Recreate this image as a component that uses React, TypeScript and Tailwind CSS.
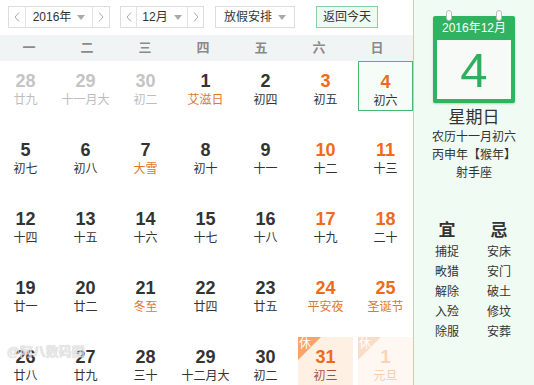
import React from "react";

type Day = {
  n: string;
  l: string;
  kind?: "prev" | "wk" | "fest" | "today" | "rest" | "next";
};

const days: Day[] = [
  { n: "28", l: "廿九", kind: "prev" },
  { n: "29", l: "十一月大", kind: "prev" },
  { n: "30", l: "初二", kind: "prev" },
  { n: "1", l: "艾滋日", kind: "fest" },
  { n: "2", l: "初四" },
  { n: "3", l: "初五", kind: "wk" },
  { n: "4", l: "初六", kind: "today" },
  { n: "5", l: "初七" },
  { n: "6", l: "初八" },
  { n: "7", l: "大雪", kind: "fest" },
  { n: "8", l: "初十" },
  { n: "9", l: "十一" },
  { n: "10", l: "十二", kind: "wk" },
  { n: "11", l: "十三", kind: "wk" },
  { n: "12", l: "十四" },
  { n: "13", l: "十五" },
  { n: "14", l: "十六" },
  { n: "15", l: "十七" },
  { n: "16", l: "十八" },
  { n: "17", l: "十九", kind: "wk" },
  { n: "18", l: "二十", kind: "wk" },
  { n: "19", l: "廿一" },
  { n: "20", l: "廿二" },
  { n: "21", l: "冬至", kind: "fest" },
  { n: "22", l: "廿四" },
  { n: "23", l: "廿五" },
  { n: "24", l: "平安夜", kind: "fest" },
  { n: "25", l: "圣诞节", kind: "fest" },
  { n: "26", l: "廿八" },
  { n: "27", l: "廿九" },
  { n: "28", l: "三十" },
  { n: "29", l: "十二月大" },
  { n: "30", l: "初二" },
  { n: "31", l: "初三", kind: "rest" },
  { n: "1", l: "元旦", kind: "next" },
];

const Caret = () => (
  <svg width="8" height="5" viewBox="0 0 8 5" className="ml-[6px]">
    <path d="M0 0 L8 0 L4 5 Z" fill="#aaa" />
  </svg>
);

const Chev = ({ dir }: { dir: "l" | "r" }) => (
  <svg width="6" height="10" viewBox="0 0 6 10">
    <path
      d={dir === "l" ? "M5 0.5 L1 5 L5 9.5" : "M1 0.5 L5 5 L1 9.5"}
      stroke="#aaa"
      strokeWidth="1"
      fill="none"
    />
  </svg>
);

function Cell({ d }: { d: Day }) {
  let num = "text-[#333]";
  let lun = "text-[#333]";
  let box = "";
  if (d.kind === "prev") {
    num = "text-[#c4c4c4]";
    lun = "text-[#bdbdbd]";
  } else if (d.kind === "wk") {
    num = "text-[#f06a1c]";
  } else if (d.kind === "fest") {
    lun = "text-[#e0782c]";
    if (d.l === "平安夜" || d.l === "圣诞节") num = "text-[#f06a1c]";
  } else if (d.kind === "today") {
    num = "text-[#f06a1c]";
    box = "border border-[#4cb672] bg-[#f6fdf8]";
  } else if (d.kind === "rest") {
    num = "text-[#f06a1c]";
    lun = "text-[#a8503a]";
    box = "bg-[#fff0e4]";
  } else if (d.kind === "next") {
    num = "text-[#fbd2b4]";
    lun = "text-[#f7cdb0]";
    box = "bg-[#fff8f2]";
  }
  return (
    <div className={`relative h-[50px] w-[55px] flex flex-col items-center ${box}`}>
      {(d.kind === "rest" || d.kind === "next") && (
        <div className="absolute left-0 top-0 w-[23px] h-[23px]">
          <svg width="23" height="23" viewBox="0 0 23 23" className="absolute left-0 top-0">
            <path d="M0 0 L23 0 L0 23 Z" fill={d.kind === "rest" ? "#f6a46a" : "#fbdcc6"} />
          </svg>
          <span className="absolute left-[1px] top-[0px] text-[12px] leading-[14px] text-white">休</span>
        </div>
      )}
      <div className={`mt-[9px] h-[22px] leading-[22px] text-[18px] font-bold ${num}`} style={{ fontFamily: "'Liberation Sans', Arial, sans-serif" }}>
        {d.n}
      </div>
      <div className={`h-[16px] leading-[16px] text-[12px] whitespace-nowrap ${lun}`}>{d.l}</div>
    </div>
  );
}

export default function App() {
  const font = "'Liberation Sans', 'Noto Sans CJK SC', sans-serif";
  return (
    <div
      className="flex w-[534px] h-[385px] overflow-hidden bg-white text-[#333]"
      style={{ fontFamily: font }}
    >
      <div className="relative w-[413px] shrink-0 flex flex-col overflow-hidden">
        <div className="h-[35px] flex items-start pt-[6px] pl-[8px] shrink-0 text-[12px]">
          <div className="flex h-[22px] w-[102px] border border-[#ddd] bg-white">
            <div className="w-[17px] flex items-center justify-center border-r border-[#e3e3e3]"><Chev dir="l" /></div>
            <div className="flex-1 flex items-center justify-center">2016年<Caret /></div>
            <div className="w-[17px] flex items-center justify-center border-l border-[#e3e3e3]"><Chev dir="r" /></div>
          </div>
          <div className="ml-[10px] flex h-[22px] w-[84px] border border-[#ddd] bg-white">
            <div className="w-[16px] flex items-center justify-center border-r border-[#e3e3e3]"><Chev dir="l" /></div>
            <div className="flex-1 flex items-center justify-center">12月<Caret /></div>
            <div className="w-[16px] flex items-center justify-center border-l border-[#e3e3e3]"><Chev dir="r" /></div>
          </div>
          <div className="ml-[11px] flex h-[22px] w-[80px] items-center justify-center border border-[#ddd] bg-white">
            放假安排<Caret />
          </div>
          <div className="ml-[21px] flex h-[22px] w-[62px] items-center justify-center border border-[#86d39f] bg-[#effaf2]">
            返回今天
          </div>
        </div>
        <div className="h-[26px] shrink-0 bg-[#f1f4f4] grid grid-cols-[repeat(7,58px)] items-center text-[13px] font-bold text-[#8a8a8a]">
          {["一", "二", "三", "四", "五", "六", "日"].map((w) => (
            <div key={w} className="text-center">{w}</div>
          ))}
        </div>
        <div className="ml-[-2px] grid grid-cols-[repeat(7,55px)] gap-x-[5px] gap-y-[19px]">
          {days.map((d, i) => (
            <Cell key={i} d={d} />
          ))}
        </div>
        <div
          className="absolute left-[7px] top-[344px] text-[13px] leading-[16px] font-bold text-[#e2e2e2] opacity-80"
          style={{ textShadow: "0 0 1px #bbb" }}
        >
          @阿八数码圈
        </div>
      </div>
      <div className="flex-1 border-l border-[#a9dfb8] bg-[#f0fbf4] flex flex-col items-center">
        <div className="relative mt-[16px] w-[82px] h-[87px] bg-[#2fb360] rounded-[2px] shadow-[0_1px_2px_rgba(0,0,0,0.2)] flex flex-col">
          <div className="absolute left-[13px] top-[-6px] w-[6px] h-[11px] rounded-full bg-white border border-[#bbb]" />
          <div className="absolute left-[63px] top-[-6px] w-[6px] h-[11px] rounded-full bg-white border border-[#bbb]" />
          <div className="h-[24px] flex items-center justify-center text-white text-[12px]">2016年12月</div>
          <div className="mx-[4px] h-[59px] bg-[#f8faf8] flex items-center justify-center text-[#2fae5d] text-[49px] leading-[50px]" style={{ fontFamily: "'Liberation Sans', Arial, sans-serif" }}>
            4
          </div>
        </div>
        <div className="mt-[5px] text-[17px] leading-[20px]">星期日</div>
        <div className="text-[12px] leading-[18px]">农历十一月初六</div>
        <div className="text-[12px] leading-[18px]">丙申年【猴年】</div>
        <div className="text-[12px] leading-[18px]">射手座</div>
        <div className="mt-[38px] grid grid-cols-[52px_52px] text-center text-[12px] leading-[20px] mr-[2px]">
          <div className="text-[17px] leading-[22px] font-bold">宜</div>
          <div className="text-[17px] leading-[22px] font-bold">忌</div>
          <div>捕捉</div><div>安床</div>
          <div>畋猎</div><div>安门</div>
          <div>解除</div><div>破土</div>
          <div>入殓</div><div>修坟</div>
          <div>除服</div><div>安葬</div>
        </div>
      </div>
    </div>
  );
}
